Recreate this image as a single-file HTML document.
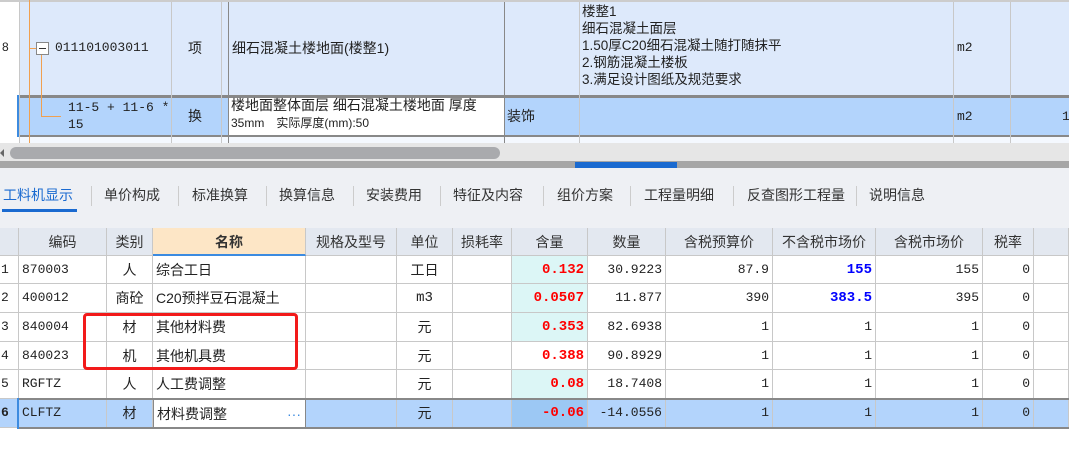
<!DOCTYPE html>
<html><head><meta charset="utf-8"><style>
*{margin:0;padding:0;box-sizing:border-box}
body{width:1069px;height:454px;overflow:hidden;background:#fff;font-family:"Liberation Sans","Noto Sans CJK SC",sans-serif;font-size:13px;color:#222;position:relative}
.a{position:absolute}
.c{position:absolute;border-right:1px solid #c8c8c8;border-bottom:1px solid #c8c8c8;white-space:nowrap;overflow:hidden;line-height:28px;padding:0 3px}
.r{text-align:right}.m{text-align:center}
.red{color:#f00;font-weight:bold;font-family:"Liberation Mono","Noto Sans CJK SC",monospace;font-size:14px}
.blue{color:#00f;font-weight:bold;font-family:"Liberation Mono","Noto Sans CJK SC",monospace;font-size:14px}
.mono{font-family:"Liberation Mono","Noto Sans CJK SC",monospace;font-size:13px}
.tab{position:absolute;top:185px;font-size:14px;color:#333}
.sep{position:absolute;top:186px;width:1px;height:20px;background:#ccc}
</style></head><body>
<!-- top grid -->
<div class="a" style="left:0;top:0;width:1069px;height:145px;background:#dde9fb"></div>
<div class="a" style="left:0;top:136px;width:1069px;height:9px;background:#f4f8fe"></div>
<div class="a" style="left:0;top:0;width:1069px;height:2px;background:#ccc"></div>
<div class="a" style="left:0;top:2px;width:19px;height:143px;background:#fff"></div>
<div class="a" style="left:19px;top:96px;width:1050px;height:40px;background:#b3d4fc"></div>
<div class="a" style="left:229px;top:97px;width:275px;height:38px;background:#fff"></div>
<div class="a" style="left:17px;top:95px;width:1052px;height:3px;background:#888"></div>
<div class="a" style="left:17px;top:135px;width:1052px;height:2px;background:#888"></div>
<div class="a" style="left:17px;top:95px;width:2px;height:42px;background:#3c8be0"></div>
<!-- vertical lines -->
<div class="a" style="left:19px;top:2px;width:1px;height:143px;background:#c8c8c8"></div>
<div class="a" style="left:171px;top:2px;width:1px;height:143px;background:#c8c8c8"></div>
<div class="a" style="left:221px;top:2px;width:1px;height:143px;background:#c8c8c8"></div>
<div class="a" style="left:228px;top:2px;width:1px;height:143px;background:#888"></div>
<div class="a" style="left:504px;top:2px;width:1px;height:143px;background:#888"></div>
<div class="a" style="left:579px;top:2px;width:1px;height:143px;background:#c8c8c8"></div>
<div class="a" style="left:953px;top:2px;width:1px;height:143px;background:#c8c8c8"></div>
<div class="a" style="left:1010px;top:2px;width:1px;height:143px;background:#c8c8c8"></div>
<!-- tree lines -->
<div class="a" style="left:29px;top:0;width:1px;height:145px;background:#f0a050"></div>
<div class="a" style="left:29px;top:48px;width:8px;height:1px;background:#f0a050"></div>
<div class="a" style="left:41px;top:55px;width:1px;height:61px;background:#f0a050"></div>
<div class="a" style="left:41px;top:116px;width:20px;height:1px;background:#f0a050"></div>
<div class="a" style="left:36px;top:42px;width:13px;height:13px;border:1px solid #888;background:#fff"></div>
<div class="a" style="left:39px;top:48px;width:7px;height:1px;background:#333"></div>
<div class="a" style="left:2px;top:40px;font-size:12px">8</div>
<div class="a mono" style="left:55px;top:40px">011101003011</div>
<div class="a" style="left:188px;top:38px;font-size:14px">项</div>
<div class="a" style="left:232px;top:38px;font-size:14px">细石混凝土楼地面(楼整1)</div>
<div class="a mono" style="left:68px;top:99px;line-height:17px">11-5 + 11-6 *<br>15</div>
<div class="a" style="left:188px;top:106px;font-size:14px">换</div>
<div class="a" style="left:231px;top:97px;font-size:14px;line-height:17px">楼地面整体面层 细石混凝土楼地面 厚度<br><span style="font-size:12px">35mm　实际厚度(mm):50</span></div>
<div class="a" style="left:507px;top:106px;font-size:14px">装饰</div>
<div class="a" style="left:582px;top:3px;font-size:13.5px;line-height:17px">楼整1<br>细石混凝土面层<br>1.50厚C20细石混凝土随打随抹平<br>2.钢筋混凝土楼板<br>3.满足设计图纸及规范要求</div>
<div class="a mono" style="left:957px;top:40px">m2</div>
<div class="a mono" style="left:957px;top:109px">m2</div>
<div class="a mono" style="left:1062px;top:109px">1</div>
<div class="a" style="left:0;top:143px;width:1069px;height:27px;background:#e6e6e6"></div>
<div class="a" style="left:10px;top:147px;width:490px;height:12px;border-radius:6px;background:#a9aaad"></div>
<div class="a" style="left:0;top:149px;width:0;height:0;border:4px solid transparent;border-right-color:#666;border-left:0"></div>
<div class="a" style="left:0;top:161px;width:1069px;height:7px;background:#a6a6a6"></div>
<div class="a" style="left:575px;top:162px;width:102px;height:6px;background:#1a6ad0"></div>
<!-- tabs -->
<div class="a" style="left:0;top:168px;width:1069px;height:60px;background:#eef0f4"></div>
<div class="tab" style="left:3px;color:#1a6ad0">工料机显示</div>
<div class="a" style="left:2px;top:209px;width:75px;height:3px;background:#1a6ad0"></div>
<div class="sep" style="left:91px"></div>
<div class="tab" style="left:104px">单价构成</div>
<div class="sep" style="left:178px"></div>
<div class="tab" style="left:192px">标准换算</div>
<div class="sep" style="left:266px"></div>
<div class="tab" style="left:279px">换算信息</div>
<div class="sep" style="left:353px"></div>
<div class="tab" style="left:366px">安装费用</div>
<div class="sep" style="left:440px"></div>
<div class="tab" style="left:453px">特征及内容</div>
<div class="sep" style="left:543px"></div>
<div class="tab" style="left:557px">组价方案</div>
<div class="sep" style="left:630px"></div>
<div class="tab" style="left:644px">工程量明细</div>
<div class="sep" style="left:733px"></div>
<div class="tab" style="left:747px">反查图形工程量</div>
<div class="sep" style="left:856px"></div>
<div class="tab" style="left:869px">说明信息</div>
<!-- lower grid -->
<div id="g"></div>
<script>
var cols=[0,19,107,153,306,397,453,512,588,666,773,876,983,1034,1069];
var hdr=["","编码","类别","名称","规格及型号","单位","损耗率","含量","数量","含税预算价","不含税市场价","含税市场价","税率",""];
var rows=[
["1","870003","人","综合工日","","工日","","0.132","30.9223","87.9","155","155","0"],
["2","400012","商砼","C20预拌豆石混凝土","","m3","","0.0507","11.877","390","383.5","395","0"],
["3","840004","材","其他材料费","","元","","0.353","82.6938","1","1","1","0"],
["4","840023","机","其他机具费","","元","","0.388","90.8929","1","1","1","0"],
["5","RGFTZ","人","人工费调整","","元","","0.08","18.7408","1","1","1","0"],
["6","CLFTZ","材","材料费调整","","元","","-0.06","-14.0556","1","1","1","0"]];
var ys=[228,256,284,313,342,370,399,428];
var h="";
for(var i=0;i<13;i++){var bg=i==3?"#fde6c6":"#e3e8f0";
h+='<div class="c m" style="left:'+cols[i]+'px;top:228px;width:'+(cols[i+1]-cols[i])+'px;height:28px;background:'+bg+';font-size:14px;color:#333;'+(i==3?'font-weight:bold;border-bottom:2px solid #3c8be0;':'')+'">'+hdr[i]+'</div>';}
h+='<div class="c" style="left:1034px;top:228px;width:35px;height:28px;background:#e3e8f0"></div>';
for(var r=0;r<6;r++){var y=ys[r+1],hh=ys[r+2]-y,sel=r==5;
for(var i=0;i<13;i++){var v=rows[r][i],cls="c",st="",bg=sel?"#b3d4fc":"#fff";
if(i==0){cls+=" mono";st="padding:0 1px;"+(sel?"font-weight:bold;":"");}
if(i==1)cls+=" mono";
if(i==2||i==5)cls+=" m";
if(i==5&&v=="m3")cls+=" mono";
if(i==3)st+="font-size:14px;";
if(i==2||i==5)st+="font-size:14px;";
if(i==7){cls+=" r red";bg=sel?"#9cc8f4":"#dcf6f6";if(r==3)bg="#fff";}
if(i>=8){cls+=" r mono";}
if(i==10&&r<2){cls=cls.replace(" mono","")+" blue";}
if(i==3&&sel){bg="#fff";st+="border:1px solid #888;";v+='<span style="position:absolute;right:4px;color:#3c8be0">···</span>';}
h+='<div class="'+cls+'" style="left:'+cols[i]+'px;top:'+y+'px;width:'+(cols[i+1]-cols[i])+'px;height:'+hh+'px;background:'+bg+';'+st+'">'+v+'</div>';}
h+='<div class="c" style="left:1034px;top:'+y+'px;width:35px;height:'+hh+'px;background:'+(sel?"#b3d4fc":"#fff")+'"></div>';}
h+='<div class="a" style="left:17px;top:398px;width:1052px;height:2px;background:#888"></div>';
h+='<div class="a" style="left:17px;top:427px;width:1052px;height:2px;background:#888"></div>';
h+='<div class="a" style="left:17px;top:398px;width:2px;height:31px;background:#3c8be0"></div>';
h+='<div class="a" style="left:83px;top:313px;width:215px;height:57px;border:3px solid #f21a1a;border-radius:4px"></div>';
document.getElementById("g").innerHTML=h;
</script>
</body></html>
